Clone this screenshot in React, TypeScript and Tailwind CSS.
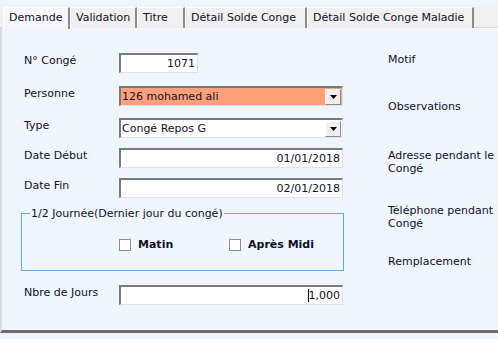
import React from 'react';

const tabs = [
    { label: 'Demande', w: 'w-[67px]', active: true },
    { label: 'Validation', w: 'w-[67px]' },
    { label: 'Titre', w: 'w-[48px]' },
    { label: 'Détail Solde Conge', w: 'w-[122px]' },
    { label: 'Détail Solde Conge Maladie', w: 'w-[167px]' },
];

const sunken =
    'h-[20px] border-t-2 border-l-2 border-r border-b border-t-[#7a7a7a] border-l-[#7a7a7a] border-r-[#e2e2e2] border-b-[#e2e2e2]';

const TextBox = ({ value, width, caret }: { value: string; width: string; caret?: boolean }) => (
    <div className={`${sunken} ${width} bg-white flex items-center justify-end pr-[2px] leading-none`}>
        {caret && <span className="h-[13px] w-px bg-black" />}
        <span>{value}</span>
    </div>
);

const Combo = ({ value, bg }: { value: string; bg: string }) => (
    <div className={`${sunken} w-[224px] ${bg} flex items-center leading-none`}>
        <span className="flex-1 pl-[1px]">{value}</span>
        <div className="h-[16px] w-[16px] mr-[1px] bg-[#f0f0f0] border border-t-white border-l-white border-r-[#8a8a8a] border-b-[#8a8a8a] flex items-center justify-center">
            <svg width="7" height="4" viewBox="0 0 7 4">
                <path d="M0 0h7L3.5 4z" fill="#000" />
            </svg>
        </div>
    </div>
);

const Row = ({ label, h, children }: { label: string; h: string; children: React.ReactNode }) => (
    <div className={`flex items-start ${h}`}>
        <div className="w-[95px] pt-[1px]">{label}</div>
        {children}
    </div>
);

const Check = ({ label, w }: { label: string; w?: string }) => (
    <div className={`flex items-center gap-[7px] whitespace-nowrap ${w ?? ''}`}>
        <span className="h-[12px] w-[12px] shrink-0 bg-white border border-[#8e8e8e]" />
        <span className="font-bold">{label}</span>
    </div>
);

export default function App() {
    return (
        <div className="w-[498px] h-[339px] overflow-hidden bg-[#eef5fc] font-['DejaVu_Sans',Verdana,sans-serif] text-[11px] leading-[13px] text-[#10102a]">
            <div className="h-[7px]" />

            {/* tab strip */}
            <div className="flex h-[21px] bg-[#f0f0f0] pl-[3px] border-b border-[#dadada]">
                {tabs.map((t) => (
                    <div
                        key={t.label}
                        className={`${t.w} h-[21px] pl-[5px] pt-[3px] whitespace-nowrap border-l border-t border-l-white border-t-white border-r-2 border-r-[#8c8c8c] ${
                            t.active ? 'bg-[#f4f8fc] h-[22px] -mb-px' : 'bg-[#f0f0f0]'
                        }`}
                    >
                        {t.label}
                    </div>
                ))}
            </div>

            {/* content */}
            <div className="flex h-[305px] bg-[#eff6fe] border-l-2 border-l-[#dcdcdc] border-b-[3px] border-b-[#6e6e6e]">
                <div className="w-[386px] pl-[22px] pt-[25px] flex flex-col shrink-0">
                    <Row label="N° Congé" h="h-[33px]">
                        <TextBox value="1071" width="w-[79px]" />
                    </Row>
                    <Row label="Personne" h="h-[32px]">
                        <Combo value="126 mohamed ali" bg="bg-[#ffa07a]" />
                    </Row>
                    <Row label="Type" h="h-[30px]">
                        <Combo value="Congé Repos G" bg="bg-white" />
                    </Row>
                    <Row label="Date Début" h="h-[30px]">
                        <TextBox value="01/01/2018" width="w-[224px]" />
                    </Row>
                    <Row label="Date Fin" h="h-[29px]">
                        <TextBox value="02/01/2018" width="w-[224px]" />
                    </Row>

                    <fieldset className="-ml-[3px] w-[323px] h-[64px] border border-[#62aaf2]">
                        <legend className="ml-[8px] px-px">1/2 Journée(Dernier jour du congé)</legend>
                        <div className="flex pl-[97px] pt-[18px]">
                            <Check label="Matin" w="w-[110px]" />
                            <Check label="Après Midi" />
                        </div>
                    </fieldset>

                    <div className="mt-[14px]">
                        <Row label="Nbre de Jours" h="h-[20px]">
                            <TextBox value="1,000" width="w-[224px]" caret />
                        </Row>
                    </div>
                </div>

                <div className="pt-[25px] flex flex-col whitespace-nowrap">
                    <div>Motif</div>
                    <div className="mt-[34px]">Observations</div>
                    <div className="mt-[36px]">
                        Adresse pendant le
                        <br />
                        Congé
                    </div>
                    <div className="mt-[29px]">
                        Téléphone pendant
                        <br />
                        Congé
                    </div>
                    <div className="mt-[25px]">Remplacement</div>
                </div>
            </div>
        </div>
    );
}
